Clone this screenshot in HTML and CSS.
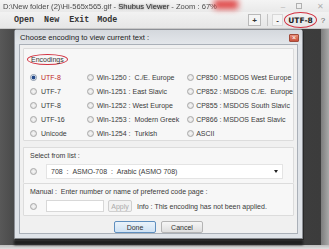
FILE: index.html
```html
<!DOCTYPE html>
<html>
<head>
<meta charset="utf-8">
<link rel="stylesheet" href="styles.css">
</head>
<body>
<div class="app">
  <div class="titlebar">
    <span class="title-text">D:\New folder (2)\Hi-565x565.gif - <span class="smear">Shubus Viewer</span> - Zoom : 67%</span>
    <span class="red-blob"></span>
    <div class="winctl">
      <span class="wc wc-min">&#8211;</span>
      <span class="wc wc-max"></span>
      <span class="wc wc-close">&#10005;</span>
    </div>
  </div>
  <div class="toolbar">
    <div class="menu">
      <span>Open</span><span>New</span><span>Exit</span><span>Mode</span>
    </div>
    <div class="tools">
      <span class="tbtn">+</span>
      <span class="tsep"></span>
      <span class="tbtn tbtn-minus">-</span>
      <span class="enc-label">UTF-8</span>
      <span class="help">?</span>
    </div>
  </div>
  <div class="workspace">
    <div class="canvas">
      <div class="dialog">
        <div class="dlg-title">
          <span>Choose encoding to view current text :</span>
          <span class="dlg-close">&#215;</span>
        </div>
        <div class="dlg-body">
          <div class="group group-enc">
            <div class="legend"><span class="circled">Encodings</span></div>
            <div class="grid">
              <div class="col col1">
                <label class="opt sel"><span class="radio on"></span>UTF-8</label>
                <label class="opt"><span class="radio"></span>UTF-7</label>
                <label class="opt"><span class="radio"></span>UTF-8</label>
                <label class="opt"><span class="radio"></span>UTF-16</label>
                <label class="opt"><span class="radio"></span>Unicode</label>
              </div>
              <div class="col col2">
                <label class="opt"><span class="radio"></span>Win-1250 : &nbsp;C./E. Europe</label>
                <label class="opt"><span class="radio"></span>Win-1251 : East Slavic</label>
                <label class="opt"><span class="radio"></span>Win-1252 : West Europe</label>
                <label class="opt"><span class="radio"></span>Win-1253 : &nbsp;Modern Greek</label>
                <label class="opt"><span class="radio"></span>Win-1254 : &nbsp;Turkish</label>
              </div>
              <div class="col col3">
                <label class="opt"><span class="radio"></span>CP850 : MSDOS West Europe</label>
                <label class="opt"><span class="radio"></span>CP852 : MSDOS C./E. &nbsp;Europe</label>
                <label class="opt"><span class="radio"></span>CP855 : MSDOS South Slavic</label>
                <label class="opt"><span class="radio"></span>CP866 : MSDOS East Slavic</label>
                <label class="opt"><span class="radio"></span>ASCII</label>
              </div>
            </div>
          </div>
          <div class="group group-list">
            <div class="glabel">Select from list :</div>
            <div class="row">
              <span class="radio"></span>
              <div class="combo"><span>708 &nbsp;: &nbsp;ASMO-708 &nbsp;: &nbsp;Arabic (ASMO 708)</span><span class="arrow"></span></div>
            </div>
          </div>
          <div class="group group-manual">
            <div class="glabel">Manual : &nbsp;Enter number or name of preferred code page :</div>
            <div class="row">
              <span class="radio"></span>
              <span class="input"></span>
              <span class="btn btn-apply">Apply</span>
              <span class="info">Info : This encoding has not been applied.</span>
            </div>
          </div>
          <div class="buttons">
            <span class="btn btn-main btn-done">Done</span>
            <span class="btn btn-main">Cancel</span>
          </div>
        </div>
      </div>
      <div class="shadow-bottom"></div>
    </div>
    <div class="scroll-strip"></div>
  </div>
  <div class="statusbar"></div>
</div>
</body>
</html>
```
FILE: styles.css
```css
* { box-sizing: border-box; }
html, body { margin: 0; padding: 0; }
body {
  width: 329px;
  height: 249px;
  overflow: hidden;
  font-family: "Liberation Sans", Arial, sans-serif;
  background: #d9d9d9;
}
.app { width: 329px; height: 249px; display: flex; flex-direction: column; }

.titlebar {
  height: 12px;
  background: linear-gradient(#f4f4f4, #e9e9e9);
  position: relative;
  display: flex;
  align-items: center;
  padding-left: 3px;
  font-size: 7.6px;
  color: #4a4a4a;
}
.title-text { white-space: nowrap; filter: blur(0.35px); }
.smear { text-shadow: 0 0 2px #555; color: #333; }
.red-blob {
  position: absolute;
  left: 214px; top: 0;
  width: 24px; height: 9px;
  background: #d22;
  filter: blur(3px);
  opacity: 0.85;
}
.winctl { margin-left: auto; display: flex; align-items: center; height: 12px; }
.wc { display: inline-block; color: #b0b0b0; font-size: 8px; }
.wc-min { width: 22px; text-align: center; }
.wc-max { width: 6px; height: 6px; border: 1px solid #b0b0b0; margin: 0 9px 0 2px; }
.wc-close { width: 18px; text-align: center; }

.toolbar {
  height: 17px;
  background: linear-gradient(#f2f2f2, #e6e6e6);
  display: flex;
  align-items: center;
  border-bottom: 1px solid #c8c8c8;
}
.menu {
  display: flex;
  gap: 8px;
  padding-left: 14px;
  font-family: "Liberation Mono", "Courier New", monospace;
  font-weight: bold;
  font-size: 8.4px;
  color: #333;
}
.menu span:nth-child(2) { margin-left: 2px; }
.menu span:nth-child(3) { margin-left: 2px; }
.tools { margin-left: auto; display: flex; align-items: center; }
.tbtn {
  width: 13px; height: 12px;
  border: 1px solid #b9b9b9;
  background: #f4f4f4;
  font-size: 8px;
  font-weight: bold;
  color: #333;
  display: flex; align-items: center; justify-content: center;
}
.tsep { width: 1px; height: 12px; background: #c4c4c4; margin: 0 4px 0 6px; }
.tbtn-minus { border-color: #d8d8d8; width: 11px; }
.enc-label {
  margin-left: 1px;
  width: 33px; height: 16px;
  border: 1.5px solid #d23040;
  border-radius: 50%;
  font-family: "DejaVu Sans", sans-serif;
  font-weight: bold;
  font-size: 7.5px;
  color: #222;
  display: flex; align-items: center; justify-content: center;
}
.help { width: 12px; text-align: center; font-size: 8px; color: #666; }

.workspace { flex: 1; display: flex; background: #4b4b4b; }
.canvas {
  flex: 1;
  padding: 0 0 0 14px;
  background: linear-gradient(90deg, #585858, #4a4a4a 14px, #3c3c3c);
  display: flex;
  flex-direction: column;
}
.scroll-strip { width: 8px; background: linear-gradient(90deg, #7c7c7c, #a9a9a9); }
.statusbar { height: 4px; background: linear-gradient(#bdbdbd, #e0e0e0); }

.dialog {
  width: 289px;
  height: 210px;
  background: #dfe3e8;
  border: 1px solid #8d9096;
  border-radius: 3px 3px 0 0;
  padding: 0 4px 4px 4px;
  display: flex;
  flex-direction: column;
  box-shadow: 1px 1px 0 #2a2a2a;
}
.shadow-bottom { height: 5px; margin-top: 1px; background: #1f1f1f; width: 289px; filter: blur(1px); }

.dlg-title {
  height: 15px;
  display: flex;
  align-items: center;
  font-size: 7.6px;
  color: #222;
  padding-left: 1px;
  background: linear-gradient(#d4d8dd, #e3e6ea);
  margin: 0 -4px;
  padding: 0 4px 0 5px;
}
.dlg-close {
  margin-left: auto;
  width: 10px; height: 8px;
  background: linear-gradient(#e9907a, #c9503a);
  border: 1px solid #a24a3a;
  border-radius: 1px;
  color: #fff;
  font-size: 7px;
  line-height: 6px;
  text-align: center;
  margin-right: -1px;
  margin-top: 1px;
}

.dlg-body {
  flex: 1;
  background: #f0f0f0;
  border: 1px solid #aab0b8;
  padding: 3px 3px 0 3px;
  display: flex;
  flex-direction: column;
  font-size: 7px;
  color: #3a3a3a;
}
.group {
  border: 1px solid #dcdcdc;
  background: #f7f7f7;
  border-radius: 1px;
}
.group-enc { height: 93px; padding: 4px 0 0 6px; }
.legend { height: 12px; display: flex; align-items: center; }
.circled {
  border: 1.2px solid #d23040;
  border-radius: 50%;
  padding: 1px 3px;
  margin-left: -3px;
  color: #333;
}
.grid { display: flex; margin-top: 5px; }
.col { display: flex; flex-direction: column; gap: 0; }
.col1 { width: 57px; }
.col2 { width: 101px; }
.opt { height: 14px; display: flex; align-items: center; white-space: nowrap; }
.opt.sel { color: #c02828; }
.radio {
  display: inline-block;
  width: 7px; height: 7px;
  border-radius: 50%;
  border: 1px solid #a8a8a8;
  background: radial-gradient(#f6f6f6, #dcdcdc);
  margin-right: 4px;
  flex: none;
}
.col2 .radio { margin-right: 3px; }
.col3 .radio { margin-right: 2px; }
.radio.on { background: radial-gradient(circle, #244a8a 0 1.6px, #e8eef6 2.2px); border-color: #8a98aa; }

.group-list { margin-top: 6px; height: 36px; padding: 2px 6px 0 6px; border-bottom: none; }
.glabel { height: 10px; display: flex; align-items: center; white-space: nowrap; }
.row { display: flex; align-items: center; margin-top: 4px; }
.combo {
  margin-left: 5px;
  flex: 1;
  height: 15px;
  background: #fff;
  border: 1px solid #e4e4e4;
  display: flex;
  align-items: center;
  padding-left: 4px;
  margin-right: 4px;
}
.arrow {
  margin-left: auto;
  margin-right: 4px;
  width: 0; height: 0;
  border-left: 2.5px solid transparent;
  border-right: 2.5px solid transparent;
  border-top: 3px solid #222;
}
.group-manual { height: 33px; padding: 2px 6px 0 6px; border-top: 1px solid #dcdcdc; }
.input {
  margin-left: 5px;
  width: 58px; height: 12px;
  background: #fff;
  border: 1px solid #d8d8d8;
}
.btn {
  display: flex; align-items: center; justify-content: center;
  border: 1px solid #b4b4b4;
  border-radius: 2px;
  background: linear-gradient(#f6f6f6, #dedede);
  color: #333;
}
.btn-apply { margin-left: 4px; width: 24px; height: 12px; color: #aaa; border-color: #cfcfcf; background: #f2f2f2; }
.info { margin-left: 5px; white-space: nowrap; }

.buttons { display: flex; justify-content: center; gap: 5px; margin-top: 5px; }
.btn-main { width: 42px; height: 12px; }
.btn-done { border-color: #5f8fbf; background: linear-gradient(#eaf3fb, #cfe2f4); }
```
